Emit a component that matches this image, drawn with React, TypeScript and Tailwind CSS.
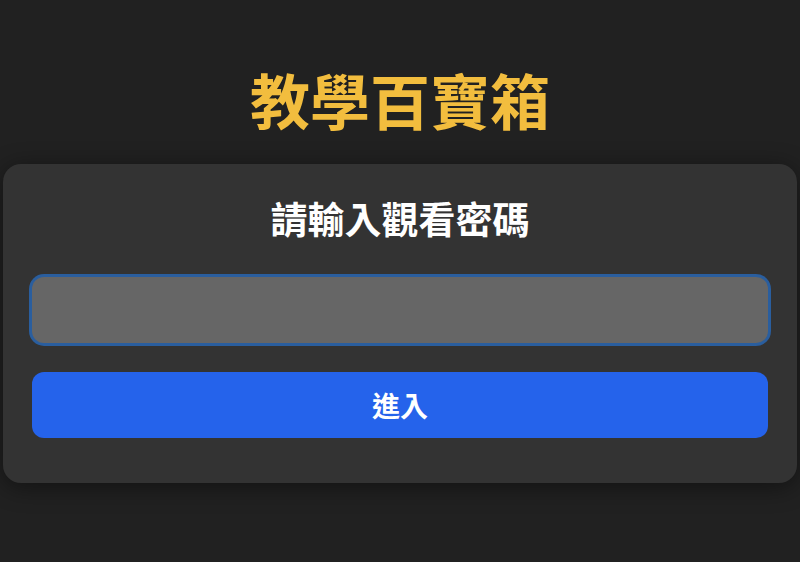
import React from "react";

export default function App() {
  return (
    <div
      className="min-h-[562px] w-full bg-[#212121] pt-[69px] flex flex-col items-center"
      style={{ fontFamily: '"Noto Sans CJK TC", "Noto Sans", sans-serif' }}
    >
      <h1 className="text-[60px] leading-none font-semibold text-[#f2bd3e] mb-[35px]">教學百寶箱</h1>
      <div className="self-stretch mx-[3px] rounded-[18px] bg-[#333333] px-[29px] pt-[36px] pb-[45px] shadow-[0_4px_24px_rgba(0,0,0,0.45)] flex flex-col items-stretch">
        <h2 className="text-[37px] leading-none font-semibold text-white text-center mb-[40px]">請輸入觀看密碼</h2>
        <input
          type="password"
          className="h-[66px] rounded-[12px] bg-[#666666] outline-none ring-[3px] ring-[#2a5e9e] text-white px-4 text-[24px]"
        />
        <button className="mt-[29px] h-[66px] rounded-[12px] bg-[#2563eb] text-white text-[28px] font-semibold leading-none">
          進入
        </button>
      </div>
    </div>
  );
}
